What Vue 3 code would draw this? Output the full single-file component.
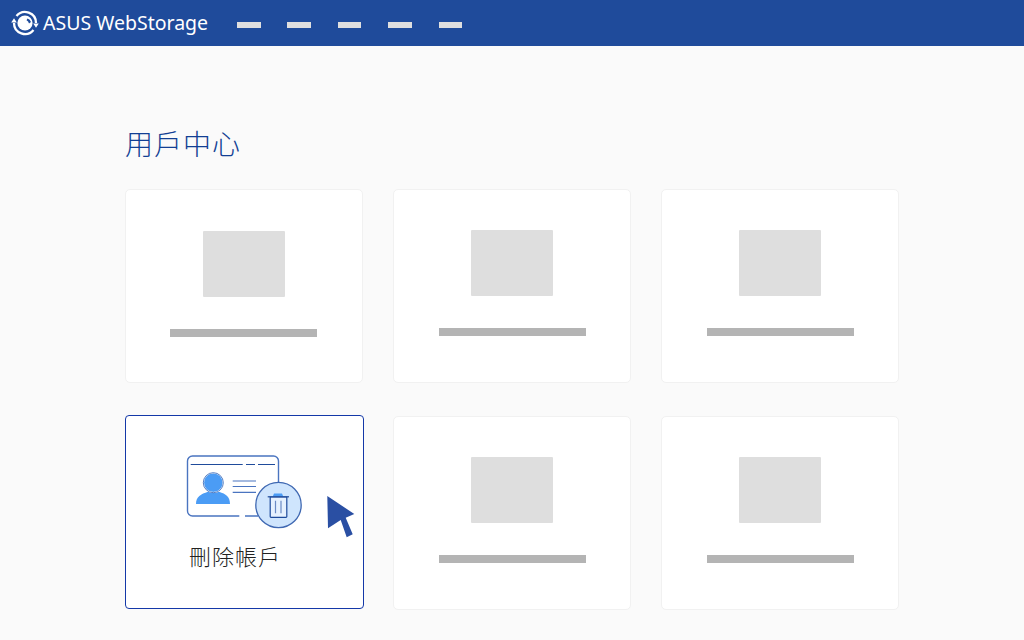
<template>
  <div class="page">
    <header class="nav">
      <div class="brand">
        <svg class="logo" viewBox="-1 -1 28 28" width="28" height="28">
          <path d="M4.500 6A11 11 0 0 1 24 13" fill="none" stroke="#fff" stroke-width="2.300"/>
          <path d="M21.500 20A11 11 0 0 1 2 13" fill="none" stroke="#fff" stroke-width="2.300"/>
          <path d="M-.8 12.500h5.600l-2.800-4.300zM21.200 13.500h5.600l-2.800 4.300z" fill="#fff"/>
          <circle cx="13" cy="13" r="7.600" fill="#fff"/>
          <path d="M15.500 8.500a6 6 0 0 1 3.500 3.500l-2 1.500a5 5 0 0 0-2.500-3.200z" fill="#1f4b9b"/>
        </svg>
        <span class="brand-name">ASUS WebStorage</span>
      </div>
      <nav class="links">
        <span v-for="n in 5" :key="n" class="link"></span>
      </nav>
    </header>
    <main class="main">
      <h1 class="title">用戶中心</h1>
      <div class="grid">
        <div class="card first">
          <div class="thumb"></div>
          <div class="bar"></div>
        </div>
        <div v-for="n in 2" :key="'a' + n" class="card">
          <div class="thumb"></div>
          <div class="bar"></div>
        </div>
        <div class="card selected">
          <svg class="art" viewBox="180 450 180 90" width="180" height="90">
            <path d="M187.500 461a5 5 0 0 1 5-5h81a5 5 0 0 1 5 5V490M239.300 516H192.500a5 5 0 0 1-5-5v-50M245 516h13" fill="#fff" stroke="#4a74c0" stroke-width="1.400"/>
            <path d="M190.700 464.500h52M246 464.500h9M258 464.500h17" stroke="#1f4b9b" stroke-width="1.200" fill="none"/>
            <path d="M232.700 481h23.300M232.700 486.500h23.300M232.700 492.300h23.300" stroke="#4a74c0" stroke-width="1.200" fill="none"/>
            <path d="M196 504c0-7.500 5-10 12-12.300 3 1.800 8 1.800 11 0 7 2.300 11 4.800 11 12.300z" fill="#4b9cf5"/>
            <circle cx="213.300" cy="482.700" r="9.700" fill="#4b9cf5" stroke="#fff" stroke-width="1"/>
            <circle cx="213.300" cy="482.700" r="10" fill="none" stroke="#2a5cb0" stroke-width="0.800"/>
            <circle cx="278.500" cy="505" r="22.700" fill="#cfe5fd" stroke="#3f68b2" stroke-width="1.300"/>
            <path d="M272.700 496.500l1.300-3h8l1.300 3z" fill="#4b9cf5"/>
            <path d="M270.200 497v19.500a.8.8 0 0 0 .8.8h15a.8.8 0 0 0 .8-.8V497z" fill="#e6f1fe" stroke="#1f4b9b" stroke-width="1.200"/>
            <path d="M267.700 496.800h21.300" stroke="#1f4b9b" stroke-width="1.200"/>
            <path d="M275.500 500.700v12.600M281 500.700v12.600" stroke="#6b8ac4" stroke-width="1.200"/>
            <path d="M327.300 496l27 18-8.600 3.700 7 16.600-6 3-6-17.300-12.700 8.300z" fill="#2a4fa3"/>
          </svg>
          <div class="label">刪除帳戶</div>
        </div>
        <div v-for="n in 2" :key="'b' + n" class="card">
          <div class="thumb"></div>
          <div class="bar"></div>
        </div>
      </div>
    </main>
  </div>
</template>

<script setup>
</script>

<style>
html, body { margin: 0; background: #fafafa; }
</style>

<style scoped>
.page {
  width: 1024px;
  height: 640px;
  overflow: hidden;
  background: #fafafa;
  font-family: "Noto Sans", "Noto Sans CJK TC", sans-serif;
}
.nav {
  height: 46px;
  background: #1f4b9b;
  display: flex;
  align-items: center;
  padding-left: 11px;
}
.brand {
  display: flex;
  align-items: center;
  gap: 4px;
}
.logo { display: block; }
.brand-name {
  color: #fff;
  font-size: 19.500px;
  line-height: 26px;
  white-space: nowrap;
}
.links {
  display: flex;
  gap: 26.800px;
  margin-left: 29px;
  margin-top: 4px;
}
.link {
  width: 23.600px;
  height: 6.600px;
  background: #dfdfdf;
}
.main { padding: 0 0 0 125px; }
.title {
  margin: 0;
  padding-top: 80px;
  height: 63px;
  font-size: 28px;
  line-height: 34px;
  font-weight: 300;
  letter-spacing: 1px;
  color: #123f94;
  font-family: "Noto Sans CJK TC", sans-serif;
}
.grid {
  display: grid;
  grid-template-columns: repeat(3, 238px);
  grid-auto-rows: 194px;
  gap: 33px 30px;
}
.card {
  box-sizing: border-box;
  background: #fff;
  border: 1px solid #f1f1f1;
  border-radius: 5px;
  display: flex;
  flex-direction: column;
  align-items: center;
  padding-top: 40px;
}
.first {
  padding-top: 41px;
  padding-right: 1px;
}
.thumb {
  width: 82px;
  height: 66px;
  background: #dedede;
  border-radius: 1px;
}
.bar {
  width: 147px;
  height: 8px;
  margin-top: 32px;
  background: #b4b4b4;
}
.selected {
  margin: -1px -1px 1px 0;
  border-color: #1438a8;
  border-radius: 4px;
  padding-top: 34px;
  align-items: flex-start;
}
.art {
  display: block;
  flex: none;
  margin-left: 54px;
}
.label {
  margin-left: 63px;
  font-size: 22px;
  line-height: 30px;
  letter-spacing: 1px;
  font-weight: 300;
  color: #222;
  font-family: "Noto Sans CJK TC", sans-serif;
}
</style>
